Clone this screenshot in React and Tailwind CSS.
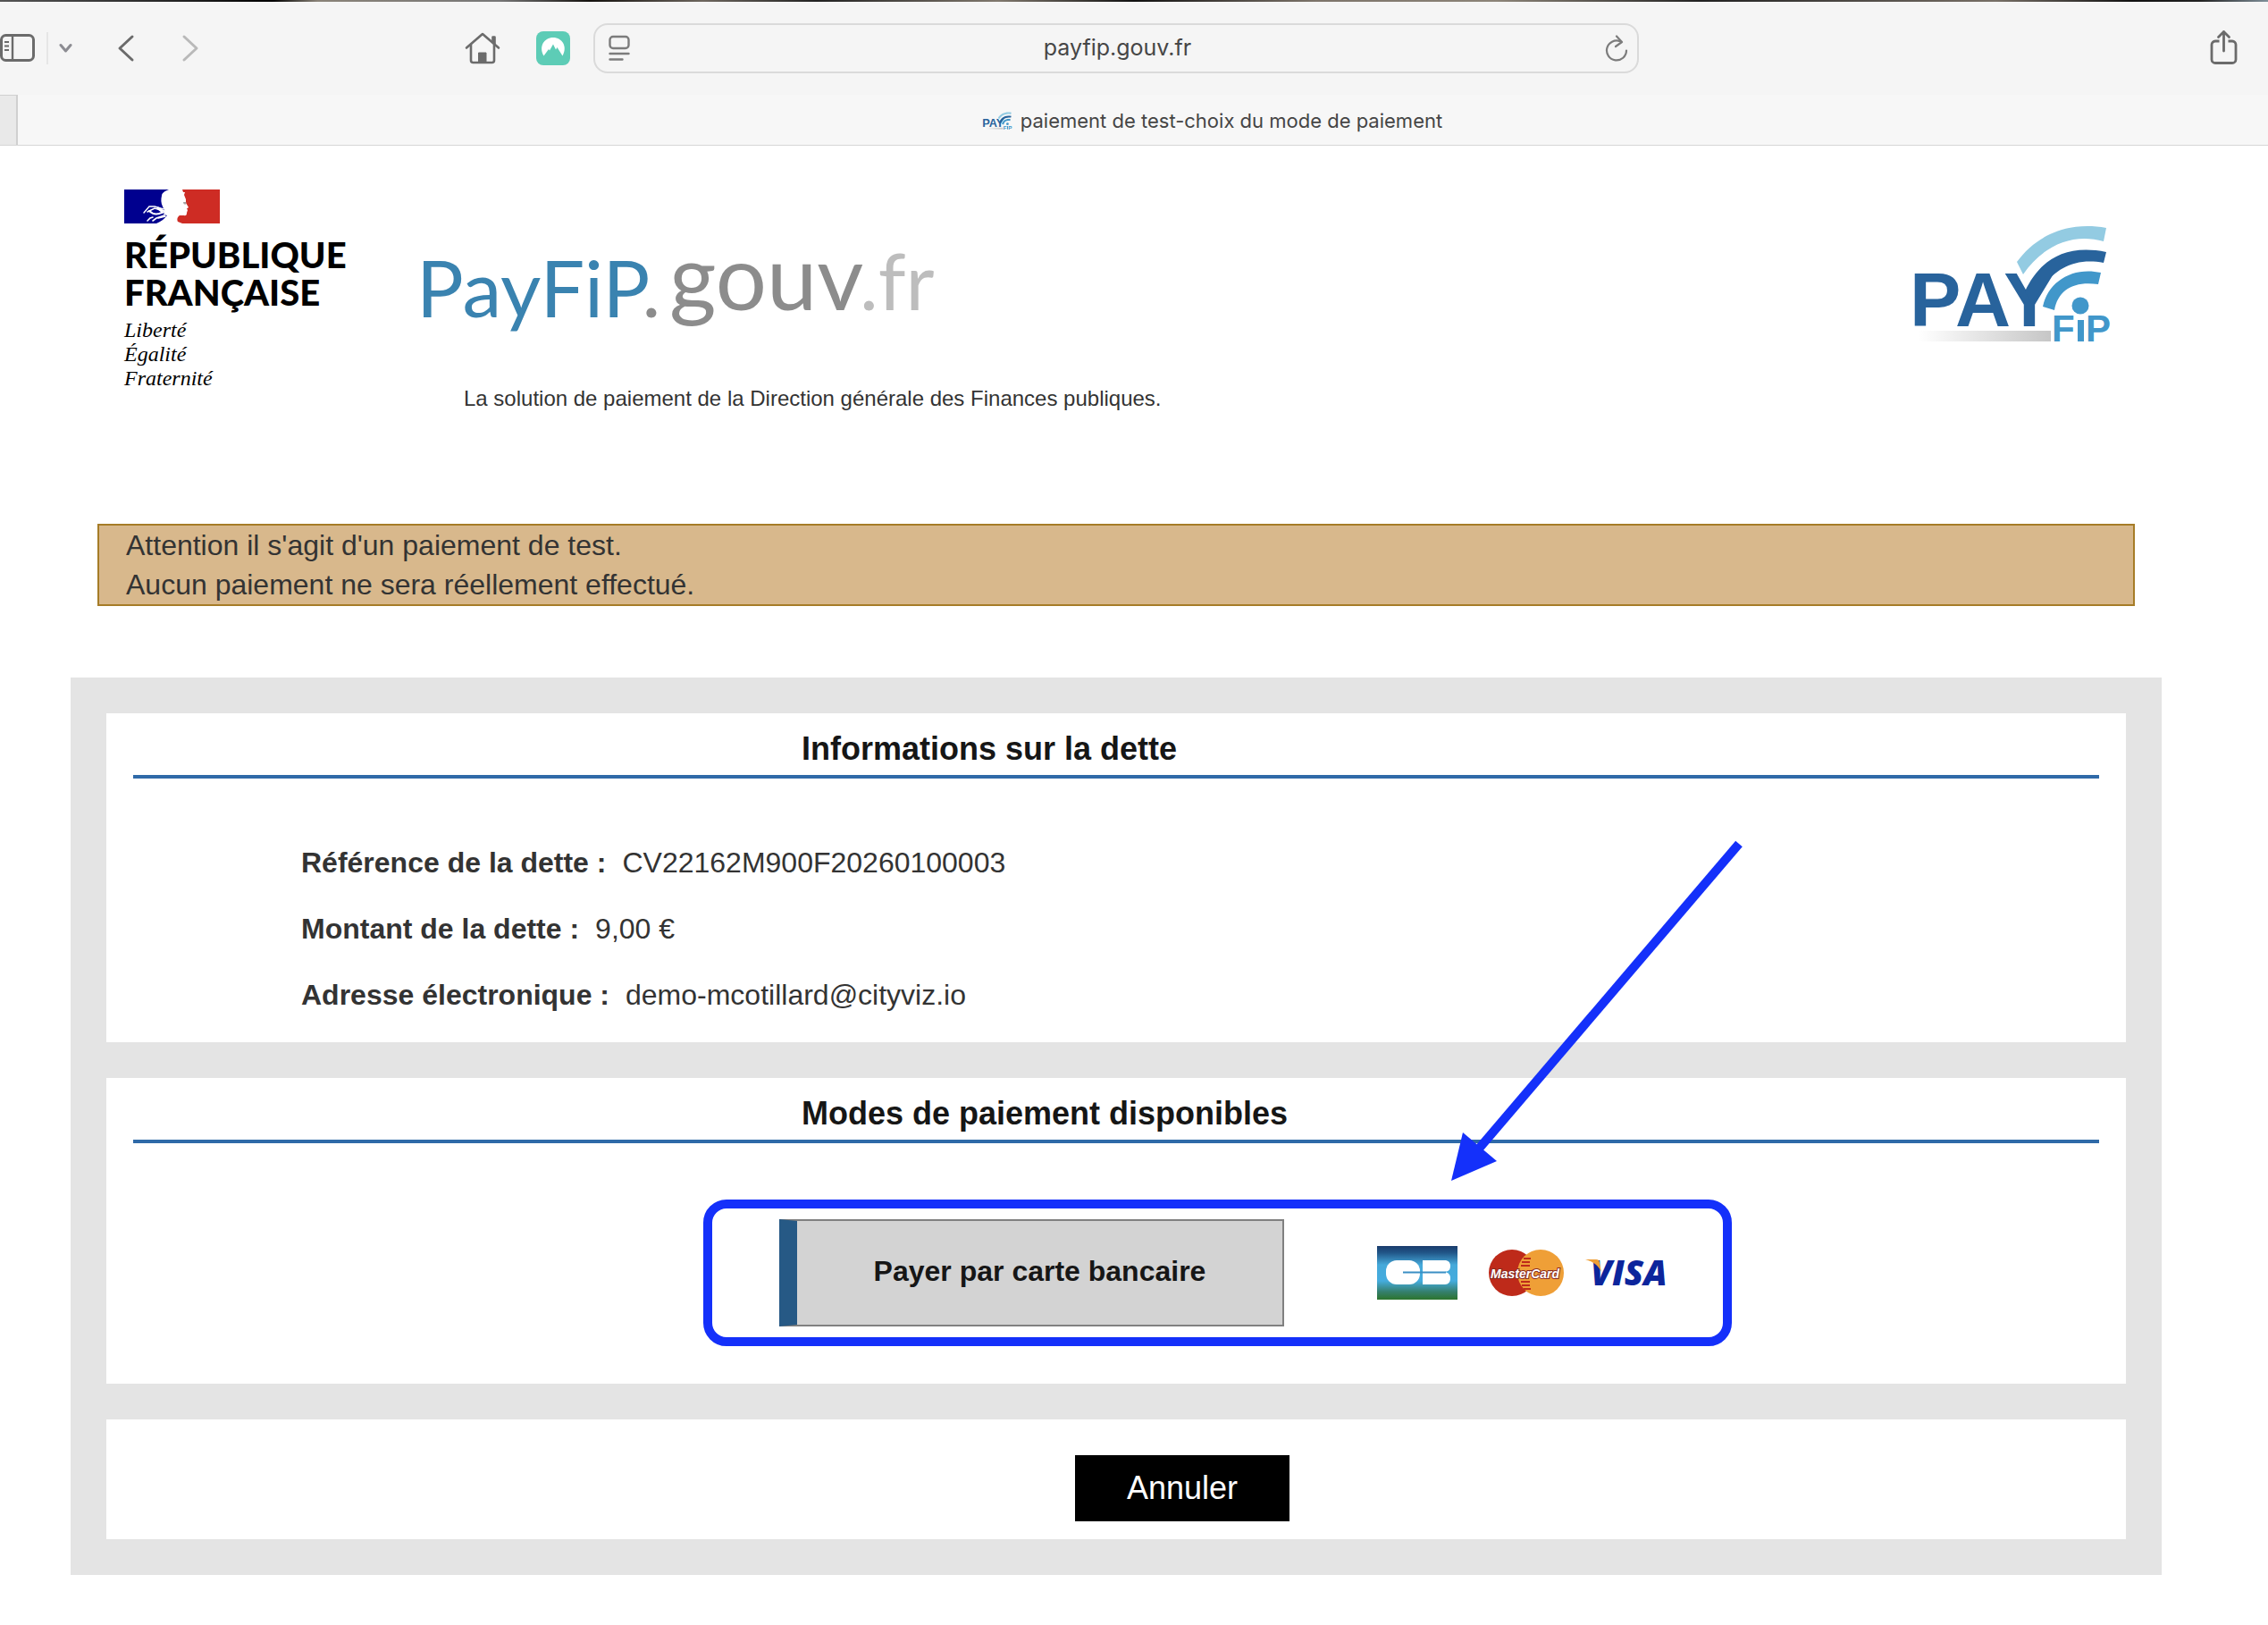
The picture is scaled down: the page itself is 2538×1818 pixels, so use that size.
const sans = "font-['Liberation_Sans',Arial,sans-serif]";

function Toolbar() {
  return (
    <div className="grid h-[104px] grid-cols-[664fr_1170fr_704fr] items-center bg-[#f5f5f5] text-[#6b6b6b]">
      <div className="flex items-center">
        <button aria-label="Barre latérale" className="w-[39px]">
          <svg width="39" height="32" viewBox="0 0 39 32" fill="none" stroke="currentColor" strokeWidth="3">
            <rect x="1.5" y="1.5" width="36" height="28" rx="5" />
            <path d="M14 2v27" strokeWidth="2.4" />
            <path d="M5 9h5M5 13.5h5M5 18h5" strokeWidth="2" />
          </svg>
        </button>
        <span className="ml-[13px] h-9 w-0.5 bg-[#e6e6e6]" />
        <button aria-label="Menu" className="ml-3">
          <svg width="15" height="12" viewBox="0 0 15 12" fill="none" stroke="#8c8c92" strokeWidth="3" strokeLinecap="round" strokeLinejoin="round">
            <path d="M2 2.500l5.500 6.500L13 2.500" />
          </svg>
        </button>
        <button aria-label="Précédent" className="ml-[50px]">
          <svg width="20" height="32" viewBox="0 0 20 32" fill="none" stroke="currentColor" strokeWidth="3" strokeLinecap="round" strokeLinejoin="round">
            <path d="M17 3L3 16l14 13" />
          </svg>
        </button>
        <button aria-label="Suivant" className="ml-[52px]">
          <svg width="20" height="32" viewBox="0 0 20 32" fill="none" stroke="#b9b9b9" strokeWidth="3" strokeLinecap="round" strokeLinejoin="round">
            <path d="M3 3l14 13L3 29" />
          </svg>
        </button>
        <button aria-label="Accueil" className="mr-10 ml-auto">
          <svg width="40" height="36" viewBox="0 0 40 36" fill="none" stroke="currentColor" strokeWidth="2.6" strokeLinecap="round" strokeLinejoin="round">
            <path d="M2 17.5L20 2l18 15.5" />
            <path d="M7 14v17.5a2.5 2.5 0 0 0 2.5 2.5h21a2.5 2.5 0 0 0 2.5-2.5V14M31.500 11V5.500h2V13" />
            <path d="M15.500 33.500V23h8.500v10.500z" fill="currentColor" strokeWidth="1" />
          </svg>
        </button>
        <button aria-label="NordVPN" className="mr-[26px]">
          <svg width="38" height="38" viewBox="0 0 38 38">
            <rect width="38" height="38" rx="8" fill="#5dccb6" />
            <path d="M8.500 27.500C2.500 17 9 7 19 7s16.500 10 10.500 20.500L23.500 18l-1.500 2.500-3-6-4 7-1-1.500z" fill="#fff" />
          </svg>
        </button>
      </div>
      <div className="flex h-14 items-center rounded-[16px] border-2 border-[#dadada] pr-[10px] pl-[15px] focus-within:border-[#aaa]">
        <svg width="24" height="30" viewBox="0 0 24 30" fill="none" stroke="#7c7c7c" strokeWidth="2.4" strokeLinecap="round">
          <rect x="1.5" y="2" width="21" height="13" rx="3.5" />
          <path d="M1.500 21h21M1.500 27.500h14" />
        </svg>
        <input
          aria-label="Adresse"
          defaultValue="payfip.gouv.fr"
          className="min-w-0 flex-1 bg-transparent text-center font-['Inter',sans-serif] text-[25px] text-[#464646] outline-none"
        />
        <button aria-label="Actualiser">
          <svg width="26" height="30" viewBox="0 0 26 30" fill="none" stroke="#7c7c7c" strokeWidth="2.2" strokeLinecap="round" strokeLinejoin="round">
            <path d="M17 7.200A11 11 0 1 0 24 17.500" />
            <path d="M13 1.500l6 6.500-7 5" />
          </svg>
        </button>
      </div>
      <div className="flex justify-end pr-[34px] pb-0.5">
        <button aria-label="Partager">
          <svg width="31" height="40" viewBox="0 0 31 40" fill="none" stroke="currentColor" strokeWidth="2.8" strokeLinecap="round" strokeLinejoin="round">
            <path d="M10.500 13H6a4 4 0 0 0-4 4v16.500a4 4 0 0 0 4 4h19a4 4 0 0 0 4-4V17a4 4 0 0 0-4-4h-4.500" strokeLinecap="butt" />
            <path d="M15.500 24V2.500M9.500 8.500l6-6 6 6" />
          </svg>
        </button>
      </div>
    </div>
  );
}

function PayMark({ className }) {
  return (
    <svg className={`overflow-visible ${className}`} viewBox="0 0 216 130" role="img" aria-label="PAY FiP">
      <defs>
        <linearGradient id="payShade" x1="0" x2="1">
          <stop offset="0" stopColor="#fff" />
          <stop offset="1" stopColor="#c6c6c6" />
        </linearGradient>
      </defs>
      <rect x="4" y="118" width="148" height="12" fill="url(#payShade)" />
      <g fontFamily="Liberation Sans, Arial, sans-serif" fontWeight="700">
        <text x="-6" y="113" fontSize="86" fill="#28639c">PAY</text>
        <text x="153" y="130" fontSize="42" fill="#4197ca">F</text>
        <text x="191" y="130" fontSize="42" fill="#4197ca">P</text>
      </g>
      <rect x="182" y="106" width="7" height="24" fill="#4197ca" />
      <circle cx="185" cy="90" r="9.5" fill="#4197ca" />
      <path d="M114 41C135 12 170-5 214 3l-3 15C175 8 142 24 121 55z" fill="#93cbe2" />
      <path d="M123 74C138 42 165 20 214 30l-3 12C172 35 148 54 131 89z" fill="#28639c" />
      <path d="M143 91C149 63 176 46 208 53l-3 13C178 62 160 72 156 95z" fill="#4197ca" />
    </svg>
  );
}

function TabBar() {
  return (
    <div className="flex h-[57px] items-stretch border-b border-[#d6d6d6] bg-[#f7f7f7]">
      <div className="w-5 border-t border-r-2 border-[#d0d0d0] bg-[#e9e9e9]" />
      <div className="flex flex-1 items-center justify-center gap-2.5 pt-0.5 pl-[156px]">
        <PayMark className="h-5 w-8" />
        <span className="font-['Inter',sans-serif] text-[22px] text-[#454545]">paiement de test-choix du mode de paiement</span>
      </div>
    </div>
  );
}

function RepubliqueLogo() {
  return (
    <div className="w-[333px] text-black">
      <svg width="107" height="38" viewBox="0 0 107 38" role="img" aria-label="Marianne">
        <path d="M0 0h50C45 2 42 4 42 7c-1 4-1 8 1 12 1 3 3 4 2 7l-1 2 4 1c-3 4-7 7-12 9H0z" fill="#00008f" />
        <path d="M65 0l1 3 2 0-1 3 2 5 0 4 3 5-2 1.500 1 1.500-1 3c0 3-1 3.500-4 3l-4 0c-3 2-3 5-2 7l5 2h42V0z" fill="#ce2c24" />
        <g fill="none" stroke="#fff" strokeWidth="1.600" strokeLinecap="round">
          <path d="M22 26l6-7 6 0 10 3" strokeWidth="1.400" />
          <path d="M26 25l8-4 11 3" />
          <path d="M28 24c3 3 7 4 11 3l6-2" strokeWidth="2" />
          <path d="M26 35l3-3 3-1M32 35l4-3 9-3M38 32l8-2" />
          <path d="M38 21l4 3" strokeWidth="3" />
        </g>
        <path d="M66 14h3.500l-1 3-2-1z" fill="#a5a5a5" />
      </svg>
      <div className="mt-[14px] font-['Lato',sans-serif] text-[40px] leading-[42px] font-black">
        RÉPUBLIQUE
        <br />
        FRANÇAISE
      </div>
      <div className="mt-2 font-['Liberation_Serif',serif] text-2xl leading-[27px] italic">
        Liberté
        <br />
        Égalité
        <br />
        Fraternité
      </div>
    </div>
  );
}

function SiteLogo() {
  return (
    <svg className="overflow-visible" width="580" height="110" viewBox="0 0 580 110" fontFamily="Lato, sans-serif" role="img" aria-label="PayFiP.gouv.fr">
      <text x="-6" y="85" fontSize="88" fill="#3a83b0">
        PayFiP<tspan fill="#8c8c8c">.</tspan>
      </text>
      <text x="277" y="77" fontSize="101" fill="#8c8c8c">gouv</text>
      <text x="490" y="77" fontSize="88" fill="#bdbdbd">.fr</text>
    </svg>
  );
}

function Header() {
  return (
    <header className="flex items-start px-[60px] pt-[49px]">
      <RepubliqueLogo />
      <div className="mt-[58px] flex-1">
        <SiteLogo />
        <p className="mt-[50px] ml-[47px] text-2xl text-[#333]">La solution de paiement de la Direction générale des Finances publiques.</p>
      </div>
      <PayMark className="mt-10 h-[130px] w-[216px]" />
    </header>
  );
}

function Panel({ title, children, className }) {
  return (
    <section className={`bg-white px-[30px] ${className}`}>
      <h2 className="border-b-4 border-[#2f6aa8] pt-[18px] pb-[7px] pl-[34%] text-[36px] leading-[44px] font-bold text-[#161616]">{title}</h2>
      {children}
    </section>
  );
}

function CardLogos() {
  return (
    <div className="flex items-center">
      <svg width="90" height="60" viewBox="0 0 90 60" role="img" aria-label="CB">
        <defs>
          <linearGradient id="cb" x1="0" y1="0" x2="0" y2="1">
            <stop offset="0" stopColor="#1a3c6c" />
            <stop offset="0.12" stopColor="#205486" />
            <stop offset="0.35" stopColor="#45a9da" />
            <stop offset="0.65" stopColor="#45acde" />
            <stop offset="0.85" stopColor="#35806f" />
            <stop offset="1" stopColor="#2c742c" />
          </linearGradient>
        </defs>
        <rect width="90" height="60" fill="url(#cb)" />
        <rect x="10" y="16" width="38" height="27" rx="12" fill="#fff" />
        <path d="M51 16h25c3 0 6 2 6 6 0 5-2 6-6 7 4 1 6 3 6 7s-2 7-6 7H51z" fill="#fff" />
        <path d="M29 29.500h48" stroke="#3a8fc4" strokeWidth="2" />
      </svg>
      <svg className="ml-[34px]" width="86" height="54" viewBox="0 0 86 54" role="img" aria-label="MasterCard">
        <circle cx="27" cy="27" r="26" fill="#be2a1a" />
        <circle cx="59" cy="27" r="26" fill="#ef9f37" />
        <path d="M40 11h8M38 15h9M37 19h10M37 37h10M38 41h9M40 45h8" stroke="#be2a1a" strokeWidth="2" />
        <text
          x="3"
          y="33"
          fontSize="14"
          fontFamily="Liberation Sans, Arial, sans-serif"
          fontWeight="700"
          fontStyle="italic"
          fill="#fff"
          stroke="#8a2a20"
          strokeWidth="2"
          paintOrder="stroke"
        >
          MasterCard
        </text>
      </svg>
      <svg className="ml-[22px] overflow-visible" width="92" height="34" viewBox="0 0 92 34" role="img" aria-label="VISA">
        <text x="7" y="31" fontSize="39" fontFamily="Open Sans, sans-serif" fontWeight="800" fontStyle="italic" fill="#0c259c">VISA</text>
        <path d="M1 2h12c3 0 4 2 4 4l2 10C16 9 9 4 1 2z" fill="#ef9f37" />
      </svg>
    </div>
  );
}

const debt = [
  ["Référence de la dette :", "CV22162M900F20260100003"],
  ["Montant de la dette :", "9,00 €"],
  ["Adresse électronique :", "demo-mcotillard@cityviz.io"],
];

export default function App() {
  return (
    <div className={`min-h-screen bg-white ${sans}`}>
      <div className="h-0.5 bg-[linear-gradient(90deg,#555_0%,#222_8%,#000_12%,#8a8378_14%,#777_22%,#15120f_26%,#6d665e_31%,#222_36%,#80786d_44%,#111_50%,#7d746a_58%,#8c8478_66%,#222_75%,#776f66_88%,#111_94%,#222_97%,#7f8f99_100%)]" />
      <Toolbar />
      <TabBar />
      <div className="mr-[119px] ml-[79px]">
        <Header />
        <div className="mx-[30px] mt-[124px] border-2 border-[#a67c27] bg-[#d8b88c] px-[30px] text-[32px] leading-[44px] text-[#333]">
          <p>Attention il s'agit d'un paiement de test.</p>
          <p>Aucun paiement ne sera réellement effectué.</p>
        </div>
        <main className="mt-20 flex flex-col gap-10 bg-[#e4e4e4] p-10">
          <Panel title="Informations sur la dette" className="pb-[31px]">
            <dl className="mt-[72px] flex flex-col gap-[30px] pl-[188px] text-[32px] leading-[44px] text-[#333]">
              {debt.map(([label, value]) => (
                <div key={label} className="flex gap-[18px]">
                  <dt className="font-bold">{label}</dt>
                  <dd>{value}</dd>
                </div>
              ))}
            </dl>
          </Panel>
          <Panel title="Modes de paiement disponibles" className="pb-[64px]">
            <div className="relative mt-[85px] ml-[723px] flex w-max items-center">
              <button className="h-[120px] w-[565px] border-2 border-l-[20px] border-[#808080] border-l-[#265985] bg-[#d3d3d3] pb-1 text-[32px] font-bold text-[#161616]">
                Payer par carte bancaire
              </button>
              <div className="ml-[104px]">
                <CardLogos />
              </div>
              <div className="pointer-events-none absolute -top-[22px] -left-[85px] h-[164px] w-[1151px] rounded-[26px] border-[10px] border-[#1430fa]" />
              <svg className="pointer-events-none absolute bottom-[162px] left-[750px]" width="332" height="382" viewBox="0 0 332 382" fill="#1430fa">
                <path d="M324 4L33 345" stroke="#1430fa" strokeWidth="10" />
                <path d="M2 381L15 327L53 359z" />
              </svg>
            </div>
          </Panel>
          <section className="flex justify-center bg-white pt-10 pb-5 pl-[148px]">
            <button className="h-[74px] w-60 bg-black text-[36px] text-white">Annuler</button>
          </section>
        </main>
      </div>
    </div>
  );
}
